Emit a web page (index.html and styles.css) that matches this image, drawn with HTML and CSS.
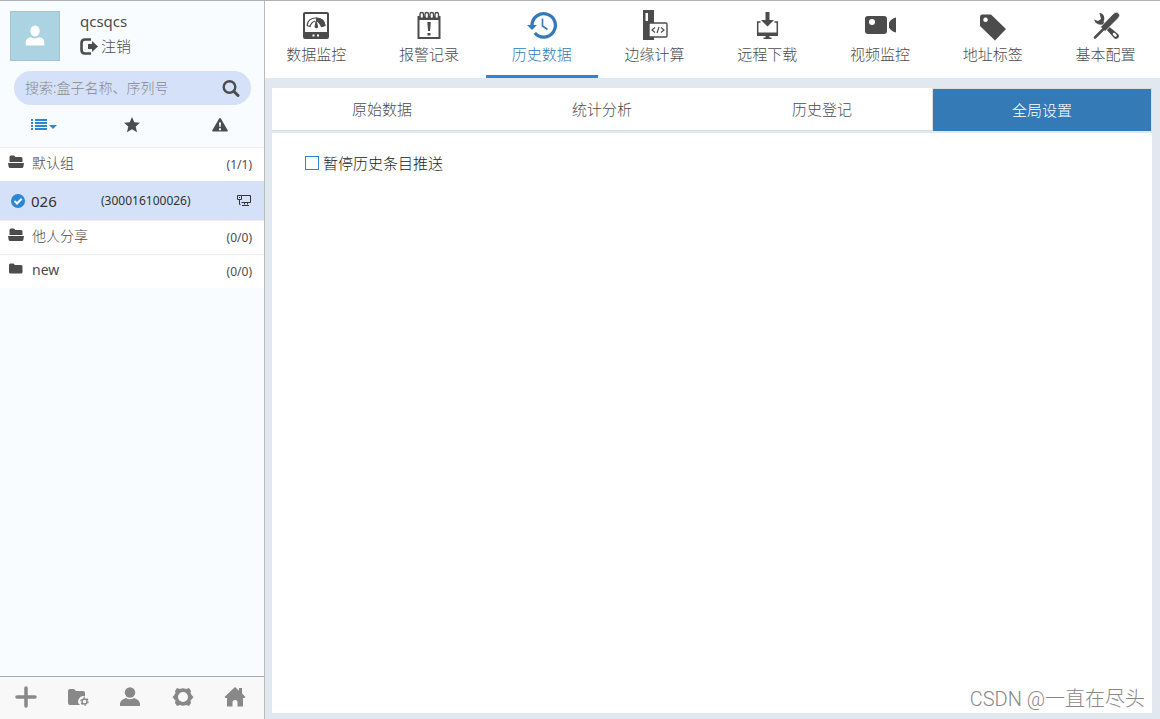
FILE: index.html
```html
<!DOCTYPE html>
<html lang="zh-CN">
<head>
<meta charset="utf-8">
<title>历史数据</title>
<link rel="stylesheet" href="styles.css">
</head>
<body>
<div class="app">
  <aside class="sidebar">
    <header class="profile">
      <div class="avatar">
        <svg width="20" height="22" viewBox="0 0 20 22"><ellipse cx="10" cy="6" rx="4.700" ry="5.500"/><path d="M.7 20.500v-3.500c0-3 2-4 5-4.700q4.300 2.200 8.600 0c3 .7 5 1.700 5 4.700v3.500z"/></svg>
      </div>
      <div class="identity">
        <span class="username">qcsqcs</span>
        <button class="logout" type="button">
          <svg width="19" height="17" viewBox="0 0 19 17"><path d="M11 1.500H5Q1.500 1.500 1.500 5v7q0 3.500 3.500 3.500h6" fill="none" stroke="currentColor" stroke-width="2.600"/><path d="M8 6h4V3l6 5.500-6 5.500v-3H8z"/></svg>注销
        </button>
      </div>
    </header>
    <form class="search">
      <input class="search-input" type="text" aria-label="搜索" placeholder="搜索:盒子名称、序列号">
      <button class="search-button" type="button" aria-label="搜索">
        <svg width="18" height="18" viewBox="0 0 18 18"><circle cx="7.500" cy="8" r="5.800" fill="none" stroke="currentColor" stroke-width="2.400"/><path d="M12 12.500l4 4" stroke="currentColor" stroke-width="3" stroke-linecap="round"/></svg>
      </button>
    </form>
    <div class="filters">
      <button class="filter filter-active" type="button" aria-label="列表">
        <svg width="26" height="12" viewBox="0 0 26 12"><path d="M0 0h2v2H0zM4 0h12v2H4zM0 3h2v2H0zM4 3h12v2H4zM0 6h2v2H0zM4 6h12v2H4zM0 9h2v2H0zM4 9h12v2H4zM18 6h8l-4 4z"/></svg>
      </button>
      <button class="filter" type="button" aria-label="收藏">
        <svg width="16" height="16" viewBox="0 0 16 16"><path d="M8 0l2.300 5.300 5.700.5-4.300 3.800 1.300 5.600L8 12.200l-5 3 1.300-5.600L0 5.800l5.700-.5z"/></svg>
      </button>
      <button class="filter" type="button" aria-label="报警">
        <svg width="16" height="14" viewBox="0 0 16 14"><path d="M8 0Q8.600 0 9 .8L15.800 12.600Q16 13.500 15 13.500H1Q0 13.500.2 12.600L7 .8Q7.400 0 8 0z"/><path d="M6.900 4.500h2.200l-.5 4.500H7.400zM7 10.300h2v2H7z" fill="#f8fcff"/></svg>
      </button>
    </div>
    <ul class="groups">
      <li class="group">
        <svg class="folder" width="16" height="14" viewBox="0 0 16 14"><path d="M1.500 7V2Q1.500.5 3 .5h3l1.500 1.500H13q1.500 0 1.500 1.500V7zM0 8h16l-.7 4Q15 13 14 13H2Q1 13 .7 12z"/></svg>
        <span class="group-name">默认组</span><span class="count">(1/1)</span>
      </li>
      <li class="group group-device">
        <svg class="check" width="14" height="14" viewBox="0 0 14 14"><circle cx="7" cy="7" r="7"/><path d="M3.500 7l2.500 2.500 4.700-4.800" fill="none" stroke="#fff" stroke-width="2"/></svg>
        <span class="device-name">026</span><span class="serial">(300016100026)</span>
        <svg class="device-icon" width="15" height="13" viewBox="0 0 15 13"><path d="M4.500 1.500h9v7h-9M.5 1.500h4v4h-4zM2 3.500h1M2.500 5.500v5h1M7.500 8.500v2M10.500 8.500v2M5 11.500h7" fill="none" stroke="currentColor"/></svg>
      </li>
      <li class="group">
        <svg class="folder" width="16" height="14" viewBox="0 0 16 14"><path d="M1.500 7V2Q1.500.5 3 .5h3l1.500 1.500H13q1.500 0 1.500 1.500V7zM0 8h16l-.7 4Q15 13 14 13H2Q1 13 .7 12z"/></svg>
        <span class="group-name">他人分享</span><span class="count">(0/0)</span>
      </li>
      <li class="group">
        <svg class="folder" width="16" height="14" viewBox="0 0 16 14"><path d="M1 10V3Q1 1.500 2.500 1.500h3L7 3h6q1.500 0 1.500 1.500V10q0 1.500-1.500 1.500H2.500Q1 11.500 1 10z"/></svg>
        <span class="group-name latin">new</span><span class="count">(0/0)</span>
      </li>
    </ul>
    <footer class="tools">
      <button class="tool" type="button" aria-label="添加"><svg width="22" height="22" viewBox="0 0 22 22"><path d="M11 2v18M2 11h18" stroke="currentColor" stroke-width="3.500" stroke-linecap="round"/></svg></button>
      <button class="tool" type="button" aria-label="分组设置"><svg width="22" height="22" viewBox="0 0 22 22"><path d="M1 17V5q0-2 2-2h4l2 2h7q2 0 2 2v3.500a5 5 0 0 0-5 8.500H3q-2 0-2-2z"/><circle cx="17.500" cy="15.500" r="2.500" fill="none" stroke="currentColor" stroke-width="1.400"/><circle cx="17.500" cy="15.500" r="3.600" fill="none" stroke="currentColor" stroke-width="1.200" stroke-dasharray="1.900 1.870"/></svg></button>
      <button class="tool" type="button" aria-label="用户"><svg width="22" height="22" viewBox="0 0 22 22"><circle cx="11" cy="6.500" r="5.200"/><path d="M1 20v-2c0-3 3-5 6-6q4 2.500 8 0c3 1 6 3 6 6v2z"/></svg></button>
      <button class="tool" type="button" aria-label="设置"><svg width="22" height="22" viewBox="0 0 22 22"><path fill-rule="evenodd" d="M5 2l3 1q3-1.500 6 0l3-1 2 3-.5 2 1.500 2.500 1.500 1.500-1.500 2-1.500 1.500.5 2.500-2 3-3-1q-3 1.500-6 0l-3 1-2-3 .5-2.500L2 13 .5 11 2 9.500 3.500 7 3 5zM11 6a5 5 0 1 0 0 10a5 5 0 1 0 0-10z"/></svg></button>
      <button class="tool" type="button" aria-label="主页"><svg width="22" height="22" viewBox="0 0 22 22"><path d="M11 1l4 3.700V2h3v5.500l3.500 3.500-1 1H19v8.500h-5.500V16q0-2-2.500-2t-2.500 2v4.500H3V12H1.500l-1-1z"/></svg></button>
    </footer>
  </aside>
  <div class="workspace">
    <header class="topbar">
      <nav class="nav">
        <a class="nav-item" href="#"><svg width="32" height="32" viewBox="0 0 32 32"><path fill-rule="evenodd" d="M5 3h22q2 0 2 2v23q0 2-2 2H5q-2 0-2-2V5q0-2 2-2zm0 2v18h22V5zM12.500 25.500v2h2v-2zm4.500 0v2h2v-2z"/><path d="M14.500 18l1-6h1.200l1.500 6q-1.700 2.500-3.700 0z"/><path d="M7 16.500q1-7.500 9-7.500t9 7.500l-3.500 1Q20 14 18 12.500M7 16.500l3 1q1-4 5-5.500" fill="none" stroke="currentColor" stroke-width="1.200"/><path d="M16 8.500q8.500.5 9.500 8l-4 1.500q-1-4-5.500-6z"/></svg>数据监控</a>
        <a class="nav-item" href="#"><svg width="32" height="32" viewBox="0 0 32 32"><path fill-rule="evenodd" d="M4.500 7h23v23h-23zm2 4v17h19V11z"/><g fill="#fff" stroke="currentColor" stroke-width="1.400"><rect x="7" y="3.500" width="3.500" height="6" rx="1.700"/><rect x="12" y="3.500" width="3.500" height="6" rx="1.700"/><rect x="17" y="3.500" width="3.500" height="6" rx="1.700"/><rect x="22" y="3.500" width="3.500" height="6" rx="1.700"/></g><path d="M14.300 13h3.500l-.7 9h-2zM14.500 24h3v2.500h-3z"/></svg>报警记录</a>
        <a class="nav-item nav-current" href="#"><svg width="32" height="32" viewBox="0 0 32 32"><path d="M6 16A11.700 11.700 0 1 1 8.800 24" fill="none" stroke="currentColor" stroke-width="3.300"/><path d="M1 16h10l-5 5z"/><path d="M16.500 9.500v7.500l5 3.500" fill="none" stroke="currentColor" stroke-width="1.600"/></svg>历史数据</a>
        <a class="nav-item" href="#"><svg width="32" height="32" viewBox="0 0 32 32"><path fill-rule="evenodd" d="M4 1h11v30H4zm2.500 3v8H9V4z"/><rect x="10" y="14" width="18" height="14" rx="1" fill="#fff" stroke="currentColor" stroke-width="1.400"/><path d="M16 18.500L13 21l3 2.500M22 18.500l3 2.500-3 2.500M20 18l-2 6" fill="none" stroke="currentColor" stroke-width="1.200"/></svg>边缘计算</a>
        <a class="nav-item" href="#"><svg width="32" height="32" viewBox="0 0 32 32"><path d="M14.500 3h4v8h4.500l-6.500 6.500-6.500-6.500h4.500zM6 23.500h21V27H6zM14.500 27h4v1.500h2V30h-8v-1.500h2z"/><path d="M9.500 13H6.700v12M23.500 13h2.800v12" fill="none" stroke="currentColor" stroke-width="1.500"/></svg>远程下载</a>
        <a class="nav-item" href="#"><svg width="32" height="32" viewBox="0 0 32 32"><rect x="1" y="7" width="22" height="18" rx="3"/><circle cx="8" cy="13" r="3" fill="#fff"/><path d="M25 13.500Q28 9 32 8.500v15Q28 23 25 18.500z"/></svg>视频监控</a>
        <a class="nav-item" href="#"><svg width="32" height="32" viewBox="0 0 32 32"><path fill-rule="evenodd" d="M3 8q0-2.500 2-2.500h9L29 20 18 31.500 3 17zM8.500 8.500a2.300 2.300 0 1 0 .1 0z"/></svg>地址标签</a>
        <a class="nav-item" href="#"><svg width="32" height="32" viewBox="0 0 32 32"><path d="M9.500 4Q13 4 14 7.500q1 2.500-.5 5.500L28 25q2 2 0 4t-4 0L12 15.500q-6 1-8-5l4 1.500 3-2z"/><path d="M10.500 18L23.500 4.500Q26 2 28.500 4T28.500 9L15 22.500z" stroke="#fff" stroke-width=".8"/><path d="M13 20.500L5 28.500" stroke="currentColor" stroke-width="2.500" stroke-linecap="round"/><path d="M24 25l1.500 1.500" stroke="#fff" stroke-width="2.500" stroke-linecap="round"/></svg>基本配置</a>
      </nav>
    </header>
    <main class="content">
      <nav class="tabs">
        <a class="tab" href="#">原始数据</a>
        <a class="tab" href="#">统计分析</a>
        <a class="tab" href="#">历史登记</a>
        <a class="tab tab-current" href="#">全局设置</a>
      </nav>
      <section class="panel">
        <label class="option"><input class="option-box" type="checkbox">暂停历史条目推送</label>
        <p class="watermark">CSDN @一直在尽头</p>
      </section>
    </main>
  </div>
</div>
</body>
</html>
```
FILE: styles.css
```css
* { box-sizing: border-box; }

body {
  margin: 0;
  color: #4c4c4c;
  font: 300 15px/20px "Noto Sans", "Noto Sans CJK SC", sans-serif;
}

svg { display: block; flex: none; fill: currentColor; }

button {
  padding: 0;
  border: 0;
  background: none;
  color: inherit;
  font: inherit;
  cursor: pointer;
}

a { color: inherit; text-decoration: none; }

.app {
  display: flex;
  min-height: 100vh;
  border-top: 1px solid #b3b0b3;
}

/* Sidebar */
.sidebar {
  display: flex;
  flex: none;
  flex-direction: column;
  width: 265px;
  border-right: 1px solid #bbb;
  background: #f8fcff;
}

.profile {
  display: flex;
  gap: 20px;
  padding: 10px;
}

.avatar {
  display: grid;
  place-items: center;
  width: 50px;
  height: 50px;
  border: 1px solid #9dc5d3;
  background: #abd3e1;
  color: #fff;
}

.identity {
  display: flex;
  flex-direction: column;
  align-items: flex-start;
  gap: 5px;
}

.username, .latin, .count, .device-name, .serial { font-weight: 400; }

.logout { display: flex; align-items: center; gap: 2px; }

.search {
  display: flex;
  align-items: center;
  height: 34px;
  margin: 0 13px 0 14px;
  padding: 0 11px;
  border-radius: 17px;
  background: #d4e1f8;
}

.search-input {
  flex: 1;
  min-width: 0;
  padding: 0;
  border: 0;
  outline: 0;
  background: none;
  color: #555;
  font: inherit;
  font-size: 14px;
}

.search-input::placeholder { color: #888; }

.filters {
  display: grid;
  grid-template-columns: repeat(3, 1fr);
  height: 42px;
  padding-bottom: 2px;
}

.filter { display: grid; place-items: center; }
.filter-active { color: #2c86d3; }

.groups {
  flex: 1;
  margin: 0;
  padding: 0;
  list-style: none;
}

.group {
  display: flex;
  align-items: center;
  height: 34px;
  padding: 0 12px 0 8px;
  border-top: 1px solid #eee;
  background: #fff;
  font-size: 14px;
}

.folder { margin: 0 8px 6px 0; }
.group-name { margin-bottom: 3px; }
.count { margin-left: auto; font-size: 12px; }

.group-device {
  height: 39px;
  padding-left: 11px;
  border-top: 0;
  background: #d4e1f8;
  color: #333;
}

.check { margin-right: 6px; color: #2c86d3; }
.device-name { width: 70px; font-size: 15px; }
.serial { font-size: 12px; }
.device-icon { margin-left: auto; }

.tools {
  display: grid;
  grid-template-columns: repeat(5, 1fr);
  height: 43px;
  padding: 0 2px 2px 0;
  border-top: 1px solid #aaa;
  background: #f8f8f8;
  color: #888;
}

.tool { display: grid; place-items: center; margin-left: -1px; }

/* Workspace */
.workspace {
  display: flex;
  flex: 1;
  flex-direction: column;
  min-width: 0;
  background: #e1e8ef;
}

.topbar { overflow: hidden; background: #fff; }

.nav { display: flex; margin: 0 -2px 0 -5px; }

.nav-item {
  display: flex;
  flex: 1;
  flex-direction: column;
  align-items: center;
  gap: 3px;
  height: 77px;
  padding-top: 8px;
  border-bottom: 3px solid transparent;
}

.nav-current { border-color: #2c86d3; color: #337ab7; }

.content {
  display: flex;
  flex: 1;
  flex-direction: column;
  gap: 2px;
  padding: 10px 8px 6px 7px;
}

.tabs {
  display: grid;
  grid-template-columns: repeat(4, 1fr);
  height: 43px;
  border-bottom: 1px solid #ddd;
  background: #fff;
}

.tab { display: grid; place-items: center; }

.tab-current {
  margin-bottom: -1px;
  border: 1px solid #ddd;
  border-bottom: 0;
  background: #337ab7;
  color: #fff;
}

.panel {
  display: flex;
  flex: 1;
  flex-direction: column;
  justify-content: space-between;
  padding: 20px 7px 2px 33px;
  background: #fff;
}

.option {
  display: flex;
  align-items: center;
  align-self: flex-start;
  gap: 4px;
  color: #222;
}

.option-box {
  appearance: none;
  width: 14px;
  height: 14px;
  margin: 0;
  border: 1px solid #2c86d3;
  background: #fff;
}

.option-box:checked { background: #2c86d3; }

.watermark {
  align-self: flex-end;
  margin: 0;
  color: #888;
  font-family: Roboto, "Noto Sans CJK SC", sans-serif;
  font-size: 20px;
  line-height: 24px;
}
```
